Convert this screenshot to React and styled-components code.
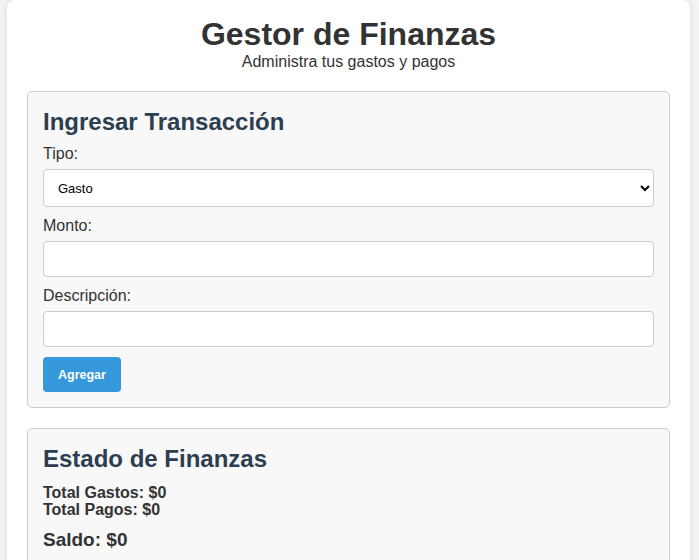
import React, { useState } from 'react';
import styled, { createGlobalStyle } from 'styled-components';

const GlobalStyle = createGlobalStyle`
  * {
    box-sizing: border-box;
  }
  body {
    margin: 0;
    padding: 0 9px 0 7px;
    background-color: #f4f4f4;
    font-family: 'Liberation Sans', Arial, sans-serif;
    color: #333;
  }
`;

const Container = styled.div`
  background: #fff;
  border-radius: 8px;
  box-shadow: 0 0 10px rgba(0, 0, 0, 0.1);
  padding: 16px 20px 20px;
  min-height: 600px;
`;

const Header = styled.header`
  text-align: center;
  margin-bottom: 20px;

  h1 {
    margin: 0;
    font-size: 32px;
    line-height: 37px;
    color: #333;
  }
  p {
    margin: 0;
    font-size: 16px;
    line-height: 18px;
  }
`;

const Card = styled.section`
  background: #f8f8f8;
  border: 1px solid #ccc;
  border-radius: 5px;
  padding: 15px;
  margin-bottom: 20px;
`;

const CardTitle = styled.h2`
  margin: 0 0 9px;
  font-size: 24px;
  line-height: 29px;
  color: #2c3e50;
`;

const Label = styled.label`
  display: block;
  font-size: 16px;
  line-height: 18px;
  margin-bottom: 6px;
  color: #333;
`;

const fieldStyles = `
  display: block;
  width: 100%;
  padding: 10px;
  margin-bottom: 10px;
  border: 1px solid #ccc;
  border-radius: 4px;
  background: #fff;
  font-family: 'Liberation Sans', Arial, sans-serif;
  font-size: 13px;
  color: #000;
`;

const Select = styled.select`
  ${fieldStyles}
  height: 38px;
`;

const Input = styled.input`
  ${fieldStyles}
  height: 36px;
`;

const Button = styled.button`
  display: block;
  padding: 0 15px;
  height: 35px;
  background: #3498db;
  color: #fff;
  border: none;
  border-radius: 4px;
  font-family: 'Liberation Sans', Arial, sans-serif;
  font-size: 12.5px;
  font-weight: bold;
  cursor: pointer;
`;

const Total = styled.p`
  margin: 0;
  font-size: 16px;
  line-height: 17px;
  font-weight: bold;
  color: #333;

  &:first-of-type {
    margin-top: 11px;
  }
`;

const Balance = styled.p`
  margin: 11px 0 0;
  font-size: 19px;
  line-height: 22px;
  font-weight: bold;
  color: #333;
`;

export default function App() {
  const [tipo, setTipo] = useState('gasto');

  return (
    <>
      <GlobalStyle />
      <Container>
        <Header>
          <h1>Gestor de Finanzas</h1>
          <p>Administra tus gastos y pagos</p>
        </Header>

        <Card>
          <CardTitle>Ingresar Transacción</CardTitle>
          <Label htmlFor="tipo">Tipo:</Label>
          <Select id="tipo" value={tipo} onChange={(e) => setTipo(e.target.value)}>
            <option value="gasto">Gasto</option>
            <option value="pago">Pago</option>
          </Select>
          <Label htmlFor="monto">Monto:</Label>
          <Input id="monto" type="number" />
          <Label htmlFor="descripcion">Descripción:</Label>
          <Input id="descripcion" type="text" />
          <Button>Agregar</Button>
        </Card>

        <Card>
          <CardTitle>Estado de Finanzas</CardTitle>
          <Total>Total Gastos: $0</Total>
          <Total>Total Pagos: $0</Total>
          <Balance>Saldo: $0</Balance>
        </Card>
      </Container>
    </>
  );
}
